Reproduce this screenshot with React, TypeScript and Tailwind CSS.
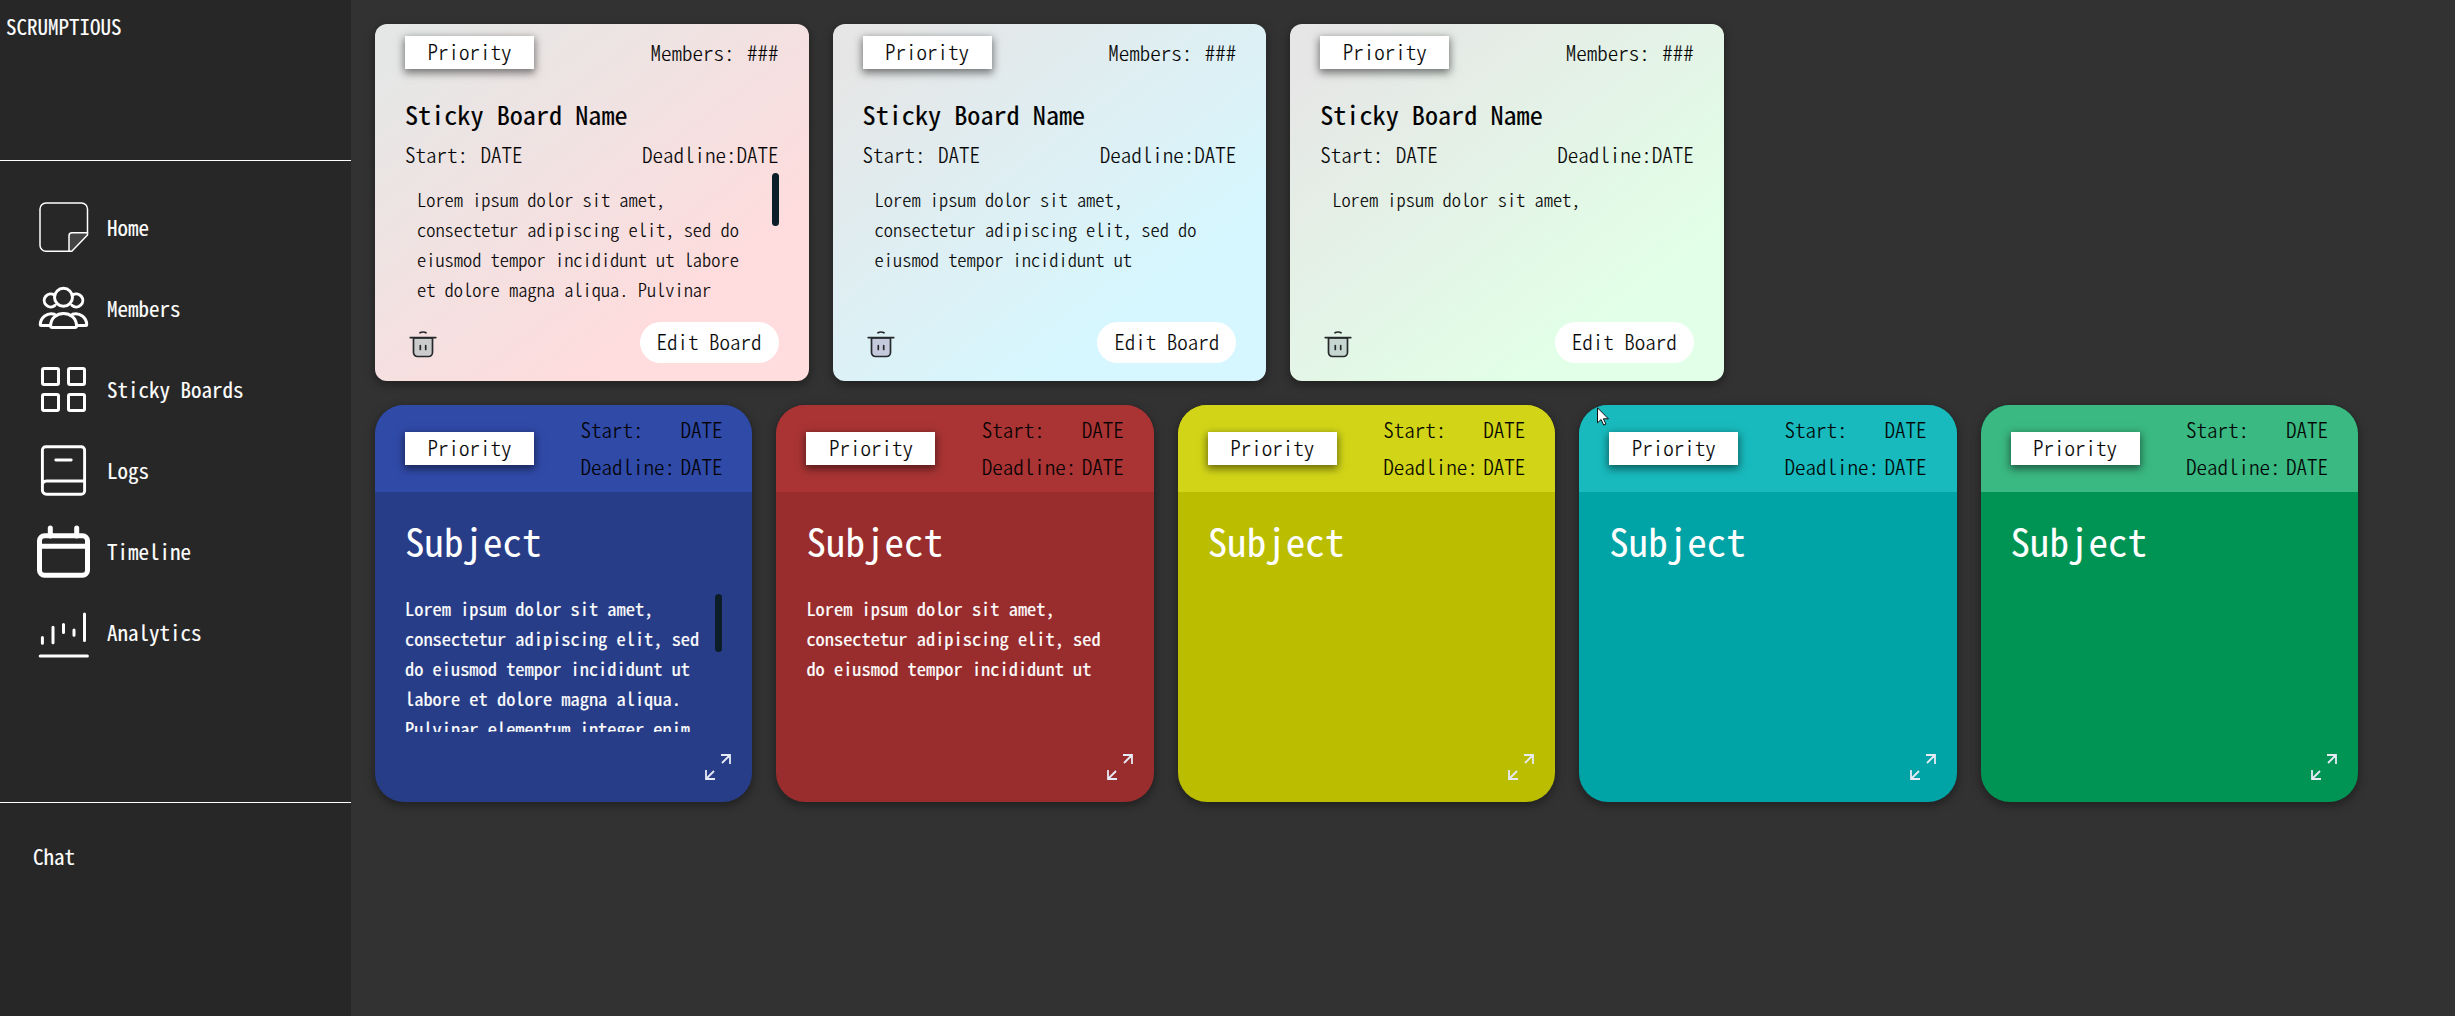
import type { ReactNode } from "react";

type Board = { text: string; gradient: string; bin: string; scroll?: boolean };
type Note = { head: string; body: string; text: string; scroll?: boolean };

const boards: Board[] = [
  {
    text: "Lorem ipsum dolor sit amet, consectetur adipiscing elit, sed do eiusmod tempor incididunt ut labore et dolore magna aliqua. Pulvinar",
    gradient: "bg-[linear-gradient(143deg,#e5e7e6_8%,#ffdcdd_76%)]",
    bin: "#cccccc",
    scroll: true,
  },
  {
    text: "Lorem ipsum dolor sit amet, consectetur adipiscing elit, sed do eiusmod tempor incididunt ut",
    gradient: "bg-[linear-gradient(143deg,#e6e6e6_8%,#d6f7ff_76%)]",
    bin: "#c4c9dc",
  },
  {
    text: "Lorem ipsum dolor sit amet,",
    gradient: "bg-[linear-gradient(143deg,#e6e6e6_8%,#e2ffe7_78%)]",
    bin: "#c6d6d0",
  },
];

const notes: Note[] = [
  {
    head: "bg-[#304aa8]",
    body: "bg-[#283d88]",
    text: "Lorem ipsum dolor sit amet, consectetur adipiscing elit, sed do eiusmod tempor incididunt ut labore et dolore magna aliqua. Pulvinar elementum integer enim",
    scroll: true,
  },
  {
    head: "bg-[#aa3434]",
    body: "bg-[#992c2c]",
    text: "Lorem ipsum dolor sit amet, consectetur adipiscing elit, sed do eiusmod tempor incididunt ut",
  },
  { head: "bg-[#d2d517]", body: "bg-[#babd00]", text: "" },
  { head: "bg-[#18babd]", body: "bg-[#00a3a6]", text: "" },
  { head: "bg-[#3ab982]", body: "bg-[#009454]", text: "" },
];

function Icon({ width, children }: { width: number; children: ReactNode }) {
  return (
    <svg
      viewBox="0 0 56 56"
      className="size-14 shrink-0"
      fill="none"
      stroke="#fff"
      strokeWidth={width}
      strokeLinecap="round"
      strokeLinejoin="round"
    >
      {children}
    </svg>
  );
}

const menu: { label: string; icon: ReactNode }[] = [
  {
    label: "Home",
    icon: (
      <Icon width={1.5}>
        <path d="M51.5 33.8H36a3 3 0 0 0-3 3v15.4h2.8L51.5 36z" fill="#444" />
        <path d="M33 52.2H10a6 6 0 0 1-6-6V10a6 6 0 0 1 6-6h35.500a6 6 0 0 1 6 6v24" />
      </Icon>
    ),
  },
  {
    label: "Members",
    icon: (
      <Icon width={3}>
        <path d="M19 25.300a6.500 6.500 0 1 1-.5-10.200M36 25.300a6.500 6.500 0 1 0 .5-10.200" />
        <circle cx="27.500" cy="17.300" r="9" />
        <path d="M18.500 34.200C11 32.200 4.500 37.500 4.300 44.500q0 1 1 1H14M36.500 34.200C44 32.200 50.500 37.500 50.700 44.500q0 1-1 1H41" />
        <path d="M14.600 45.700C15 29.500 40 29.500 40.600 45.700q0 1.700-1.800 1.700H16.400q-1.800 0-1.800-1.700z" />
      </Icon>
    ),
  },
  {
    label: "Sticky Boards",
    icon: (
      <Icon width={3}>
        <rect x="6.500" y="7.500" width="16" height="16" rx="1.500" />
        <rect x="32.500" y="7.500" width="16" height="16" rx="1.500" />
        <rect x="6.500" y="33.500" width="16" height="16" rx="1.500" />
        <rect x="32.500" y="33.500" width="16" height="16" rx="1.500" />
      </Icon>
    ),
  },
  {
    label: "Logs",
    icon: (
      <Icon width={2.9}>
        <path d="M6.400 48V8a3.300 3.300 0 0 1 3.300-3.300h35.600A3.300 3.300 0 0 1 48.600 8v41a3.300 3.300 0 0 1-3.300 3.300H10.500A4.100 4.100 0 0 1 6.400 48v-5a4 4 0 0 1 4-4h38M19.800 18h15.400" />
      </Icon>
    ),
  },
  {
    label: "Timeline",
    icon: (
      <Icon width={5}>
        <rect x="3.500" y="12.700" width="48" height="39.500" rx="5" />
        <path d="M4 23.300h47M14.300 5v8M40.700 5v8" />
      </Icon>
    ),
  },
  {
    label: "Analytics",
    icon: (
      <Icon width={3}>
        <path d="M6.400 33.500v5.700M17 23.200v15.600M27.500 20.500v8M38 26v5.300M48.500 10v26.500M4.200 52h47.200" />
      </Icon>
    ),
  },
];

function Badge() {
  return (
    <div className="h-[33px] w-[129px] shrink-0 bg-white pl-[22.500px] font-light leading-[31px] text-black shadow-[0_3px_8px_1px_rgba(0,0,0,0.5)]">
      Priority
    </div>
  );
}

function BoardCard({ board }: { board: Board }) {
  return (
    <article
      className={`flex h-[357px] w-[433.600px] flex-col rounded-[12px] px-[30px] pt-3 text-black shadow-[0_3px_8px_1px_rgba(0,0,0,0.35)] [-webkit-text-stroke:0.15px] ${board.gradient}`}
    >
      <div className="flex h-[33px] justify-between">
        <Badge />
        <span className="font-light leading-[33px] [word-spacing:2px]">Members: ###</span>
      </div>
      <h2 className="mt-[25px] text-[26.200px] font-normal leading-[41px]">Sticky Board Name</h2>
      <div className="mt-[3px] flex h-[30px] justify-between font-light leading-[32px]">
        <span className="[word-spacing:2px]">Start: DATE</span>
        <span>Deadline:DATE</span>
      </div>
      <div className="mt-[5px] flex h-[132px] justify-between overflow-hidden pl-3">
        <p className="w-[330px] pt-[11px] text-[18.400px] font-light leading-[30px]">{board.text}</p>
        {board.scroll && <div className="h-[53px] w-[7px] rounded-full bg-[#0b1d27]" />}
      </div>
      <div className="mt-[17px] flex items-start justify-between">
        <svg viewBox="0 0 30 30" className="ml-[3px] mt-[7px] size-[30px]" fill="none" stroke="#25292b" strokeWidth="1.700" strokeLinecap="round">
          <path d="M5.500 9h19v14.500a4 4 0 0 1-4 4h-11a4 4 0 0 1-4-4z" fill={board.bin} />
          <path d="M2.200 8.600h25.600M12 3.800c1.500-1 4.500-1 6 0M12.300 16.500v4M17.700 16.500v4" />
        </svg>
        <button className="h-[41px] w-[139px] rounded-full bg-white pb-[2px] font-light leading-[39px]">Edit Board</button>
      </div>
    </article>
  );
}

function NoteCard({ note }: { note: Note }) {
  return (
    <article
      className={`flex h-[397px] w-[377.400px] flex-col overflow-hidden rounded-[29px] text-white shadow-[0_3px_8px_1px_rgba(0,0,0,0.35)] ${note.body}`}
    >
      <header
        className={`flex h-[87px] justify-between px-[30px] pt-1.5 text-black [-webkit-text-stroke:0.15px] ${note.head}`}
      >
        <div className="pt-[21px]">
          <Badge />
        </div>
        <div className="grid h-[72px] w-[142px] grid-cols-[100px_42px] font-light leading-[37px]">
          <span>Start:</span>
          <span>DATE</span>
          <span>Deadline:</span>
          <span>DATE</span>
        </div>
      </header>
      <h2 className="ml-[30px] mt-[23px] text-[39px] leading-[50px]">Subject</h2>
      <div className="mx-[30px] mt-[27px] flex h-[140px] justify-between overflow-hidden">
        <p className="w-[298px] pt-px text-[18.400px] leading-[30px] [-webkit-text-stroke:0.2px]">{note.text}</p>
        {note.scroll && <div className="mt-0.5 h-[58px] w-[7px] rounded-full bg-[#0b1d27]" />}
      </div>
      <svg viewBox="0 0 26 26" className="ml-auto mr-[21px] mt-[22px] size-[26px]" fill="none" stroke="#e6eaf4" strokeWidth="1.800">
        <path d="M16 1h9v9M25 1l-8 8M10 25H1v-9M1 25l8-8" />
      </svg>
    </article>
  );
}

export default function App() {
  return (
    <div className="flex h-[1016px] w-[2455px] overflow-hidden bg-[#323232] font-['Noto_Sans_CJK_JP',monospace] text-[21px] leading-8 [font-feature-settings:'hwid']">
      <aside className="flex w-[351px] shrink-0 flex-col bg-[#272727] text-white [-webkit-text-stroke:0.12px]">
        <div className="h-[161px] border-b border-white pl-1.5 pt-2.5">SCRUMPTIOUS</div>
        <nav className="h-[642px] border-b border-white pl-9 pt-[25.500px]">
          {menu.map((item) => (
            <a key={item.label} className="flex h-[81px] items-center gap-[15px]">
              {item.icon}
              <span>{item.label}</span>
            </a>
          ))}
        </nav>
        <div className="pl-[33px] pt-[37px]">Chat</div>
      </aside>
      <main className="relative flex flex-col gap-6 p-6">
        <section className="flex gap-6">
          {boards.map((board, i) => (
            <BoardCard key={i} board={board} />
          ))}
        </section>
        <section className="flex gap-6">
          {notes.map((note, i) => (
            <NoteCard key={i} note={note} />
          ))}
        </section>
        <svg viewBox="0 0 12 19" className="absolute left-[1246px] top-[407px] h-[19px] w-3" fill="#fff" stroke="#111" strokeWidth="1">
          <path d="M.5.800v15l3.600-3.300 2.600 5.600 2.200-1-2.500-5.300h5z" />
        </svg>
      </main>
    </div>
  );
}
